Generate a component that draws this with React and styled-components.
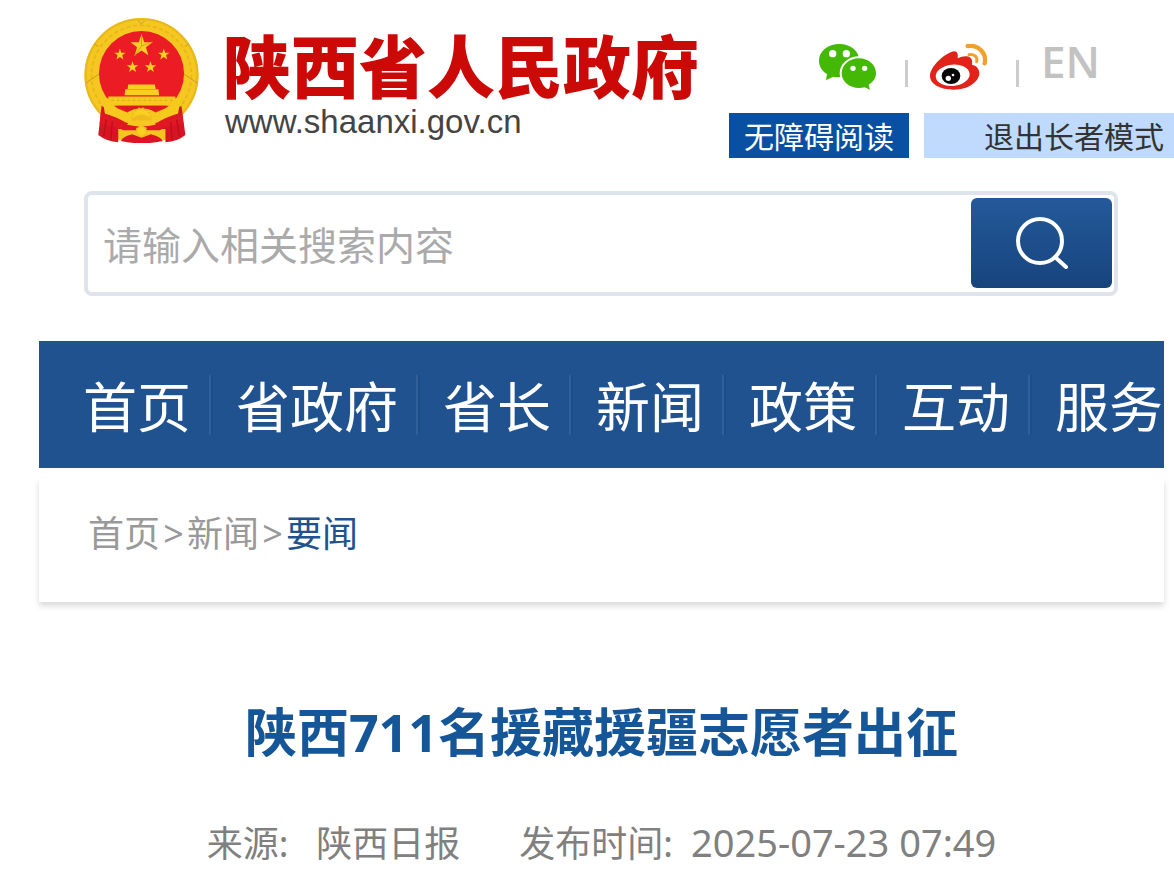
import React, { useState } from "react";
import styled, { createGlobalStyle } from "styled-components";

const GlobalStyle = createGlobalStyle`
  * {
    box-sizing: border-box;
  }

  body {
    margin: 0;
    background: #ffffff;
    font-family: "Noto Sans", "Noto Sans CJK SC", sans-serif;
    overflow-x: hidden;
  }

  a {
    color: inherit;
    text-decoration: none;
  }
`;

const Header = styled.header`
  display: flex;
  justify-content: space-between;
  align-items: flex-start;
  padding-left: 84px;
`;

const Brand = styled.a`
  display: flex;
  gap: 24px;
  padding-top: 18px;
`;

const BrandText = styled.div`
  display: flex;
  flex-direction: column;
  padding-top: 12px;
`;

const SiteName = styled.span`
  font-family: "Noto Sans CJK SC", sans-serif;
  font-weight: 900;
  font-size: 68px;
  line-height: 68px;
  white-space: nowrap;
  color: #cb0a08;
`;

const SiteUrl = styled.span`
  padding: 6px 0 0 2px;
  font-family: "Liberation Sans", sans-serif;
  font-size: 33px;
  line-height: 36px;
  color: #444444;
`;

const Tools = styled.div`
  display: flex;
  flex-direction: column;
  gap: 23px;
  padding-top: 44px;
`;

const Social = styled.div`
  display: flex;
  align-items: flex-start;
  justify-content: flex-end;
  height: 46px;
  padding-right: 74px;
`;

const SocialLink = styled.a`
  display: block;
  height: 46px;
`;

const Separator = styled.span`
  width: 3px;
  height: 27px;
  margin: 16px 22px 0 29px;
  background: #cccccc;
`;

const English = styled.a`
  font-family: "Open Sans", sans-serif;
  font-weight: 600;
  font-size: 44px;
  line-height: 34px;
  color: #c2c2c2;
`;

const Modes = styled.div`
  display: flex;
  gap: 15px;
`;

const ModeButton = styled.button`
  height: 45px;
  padding: ${(props) => (props.$light ? "0 10px 0 60px" : "0 15px")};
  border: 0;
  background: ${(props) => (props.$light ? "#bfdafd" : "#0950a3")};
  font-family: "Noto Sans CJK SC", sans-serif;
  font-size: 30px;
  line-height: 45px;
  white-space: nowrap;
  color: ${(props) => (props.$light ? "#333333" : "#ffffff")};
  cursor: pointer;
`;

const SearchForm = styled.form`
  display: flex;
  height: 105px;
  margin: 33px 56px 0 84px;
  padding: 3px 2px 4px 15px;
  border: 4px solid #dee4ec;
  border-radius: 8px;
`;

const SearchInput = styled.input`
  flex: 1;
  min-width: 0;
  padding: 0;
  border: 0;
  outline: none;
  background: transparent;
  font-family: "Noto Sans CJK SC", sans-serif;
  font-size: 39px;
  color: #333333;

  &::placeholder {
    color: #aaaaaa;
    opacity: 1;
  }
`;

const SearchButton = styled.button`
  display: flex;
  align-items: center;
  justify-content: center;
  width: 141px;
  padding: 0;
  border: 0;
  border-radius: 6px;
  background: linear-gradient(#24599b, #17447c);
  cursor: pointer;
`;

const Nav = styled.nav`
  display: flex;
  align-items: center;
  height: 127px;
  margin: 45px 10px 0 39px;
  padding-left: 44px;
  background: #20528f;
`;

const NavLink = styled.a`
  font-family: "Noto Sans CJK SC", sans-serif;
  font-size: 54px;
  line-height: 60px;
  white-space: nowrap;
  color: #ffffff;

  & + & {
    margin-left: 18px;
    padding-left: 25px;
    border-left: 2px solid #2f609b;
    box-shadow: inset 2px 0 #1d4d88;
  }
`;

const Crumbs = styled.nav`
  display: flex;
  align-items: center;
  height: 124px;
  margin: 10px 10px 0 39px;
  padding: 0 49px 13px;
  box-shadow: 0 4px 6px rgba(0, 0, 0, 0.15);
  font-size: 36px;
  line-height: 48px;
  color: #999999;
`;

const Arrow = styled.span`
  width: 27px;
  text-align: center;
`;

const Current = styled.a`
  color: #20528f;
`;

const Article = styled.main`
  margin: 0 10px 0 39px;
  padding: 96px 0 20px;
  text-align: center;
`;

const Title = styled.h1`
  margin: 0;
  font-weight: 700;
  font-size: 52px;
  line-height: 68px;
  color: #155699;
`;

const Meta = styled.div`
  display: flex;
  justify-content: center;
  gap: 59px;
  margin-top: 52px;
  font-size: 36px;
  line-height: 52px;
  color: #808080;
`;

const MetaItem = styled.div`
  display: flex;
  gap: ${(props) => props.$gap};
`;

const Time = styled.time`
  font-size: 38px;
  line-height: 48px;
`;

const navItems = ["首页", "省政府", "省长", "新闻", "政策", "互动", "服务"];

const starPoints = (cx, cy, r) => {
  const points = [];
  for (let i = 0; i < 10; i++) {
    const angle = (Math.PI / 5) * i - Math.PI / 2;
    const radius = i % 2 === 0 ? r : r * 0.4;
    points.push(
      `${cx + radius * Math.cos(angle)},${cy + radius * Math.sin(angle)}`
    );
  }
  return points.join(" ");
};

const Emblem = () => (
  <svg width="115" height="125" viewBox="42 54 344 376" aria-hidden="true">
    <circle cx="214" cy="226" r="172" fill="#f4c820" />
    <circle
      cx="214"
      cy="226"
      r="150"
      fill="none"
      stroke="#e9b41c"
      strokeWidth="5"
      strokeDasharray="12 8"
    />
    <circle
      cx="214"
      cy="226"
      r="168"
      fill="none"
      stroke="#e9b81e"
      strokeWidth="6"
    />
    <g stroke="#d39a14" strokeWidth="3" fill="none">
      <path d="M72 132l12 8M356 132l-12 8M204 62l10 10 10-10" />
      <path d="M46 250l44-30M382 250l-44-30" />
    </g>
    <circle cx="214" cy="221" r="128" fill="#ec1c24" />
    <g fill="#f8cf22">
      <polygon points={starPoints(214, 138, 35)} />
      <polygon points={starPoints(149, 164, 18)} />
      <polygon points={starPoints(281, 164, 18)} />
      <polygon points={starPoints(187, 202, 18)} />
      <polygon points={starPoints(241, 202, 18)} />
    </g>
    <path
      d="M214 103v35l-21 30M214 138l33-12"
      stroke="#dba015"
      strokeWidth="3"
      fill="none"
    />
    {/* drapes */}
    <path
      d="M94 318L84 406q26 20 60 22v-8h142v8q36-2 60-22l-12-88-60 40h-120z"
      fill="#d81322"
    />
    <path d="M144 388h142v34H144z" fill="#f3c51f" />
    <path d="M152 424q6-14 34-20l28 10 28-10q28 6 36 20-64 14-126 0z" fill="#dc1423" />
    {/* gate tower */}
    <path d="M174 254h80l3 14h8l2 18h-104l2-18h7z" fill="#f8cf22" />
    <path d="M170 269h90" stroke="#e2ab18" strokeWidth="3" />
    <path d="M114 290h202v28H114z" fill="#f6c91f" />
    <path
      d="M124 302h188"
      stroke="#e2ab18"
      strokeWidth="4"
      strokeDasharray="7 9"
    />
    {/* ribbon and cog wheels */}
    <path
      d="M96 294l18 2 8 22 50 20q14-12 42-12t42 12l50-20 8-22 18-2-8 48-60 26q-50 10-100 0l-60-26z"
      fill="#f6c91f"
    />
    <path d="M138 318h152l-38 16q-38-20-76 0z" fill="#e01822" />
    <circle
      cx="214"
      cy="354"
      r="28"
      fill="#f8cf22"
      stroke="#f0bd1d"
      strokeWidth="6"
      strokeDasharray="7 5"
    />
    <path d="M182 364q10-20 32-20t32 20z" fill="#efbb1d" />
    <path
      d="M92 338q54 14 82 36h80q28-22 82-36l4 34q-44 6-72 20h-108q-28-14-72-20z"
      fill="#e01822"
    />
    <path d="M180 362h68l10 12q-44 12-88 0z" fill="#f6c91f" />
    <circle
      cx="214"
      cy="394"
      r="15"
      fill="#f8cf22"
      stroke="#f0bd1d"
      strokeWidth="6"
      strokeDasharray="6 4"
    />
    <path
      d="M108 360l-8 50M126 366l-4 54M320 360l8 50M302 366l4 54"
      stroke="#b8101d"
      strokeWidth="4"
      fill="none"
    />
  </svg>
);

const Wechat = () => (
  <svg width="57" height="46" viewBox="57 44 171 138" aria-hidden="true">
    <path
      d="M118 44c-34 0-61 22-61 50 0 17 9 31 24 40l-3 19 22-11c6 2 12 2 18 2 34 0 60-22 60-50s-26-50-60-50z"
      fill="#44b905"
    />
    <path
      d="M177 87c-29 0-52 20-52 45s23 44 52 44c6 0 12-1 17-2l16 7-4-15c14-8 22-20 22-34 0-25-22-45-51-45z"
      fill="#44b905"
      stroke="#ffffff"
      strokeWidth="12"
      paintOrder="stroke"
    />
    <g fill="#ffffff">
      <circle cx="98" cy="73" r="11" />
      <circle cx="139" cy="73" r="11" />
      <circle cx="159" cy="117" r="8" />
      <circle cx="194" cy="117" r="8" />
    </g>
  </svg>
);

const Weibo = () => (
  <svg width="57" height="46" viewBox="390 44 171 138" aria-hidden="true">
    <path
      d="M462 66c-30 6-72 47-72 74 0 25 32 41 71 41 47 0 77-26 77-50 0-14-10-22-22-25 3-16-4-24-16-25-8-1-18 2-27 6 2-13-1-22-11-21z"
      fill="#e2231a"
    />
    <ellipse
      cx="458"
      cy="138"
      rx="51"
      ry="32"
      transform="rotate(-6 458 138)"
      fill="#ffffff"
    />
    <ellipse cx="453" cy="140" rx="28" ry="24" fill="#080808" />
    <circle cx="445" cy="147" r="8" fill="#ffffff" />
    <circle cx="459" cy="137" r="4" fill="#ffffff" />
    <g fill="none" stroke="#efa12b" strokeLinecap="round">
      <path d="M503 50c34-5 58 24 51 52" strokeWidth="13" />
      <path d="M507 76c16-3 27 8 23 21" strokeWidth="9" />
    </g>
  </svg>
);

const Magnifier = () => (
  <svg width="52" height="52" viewBox="0 0 52 52" aria-hidden="true">
    <g fill="none" stroke="#ffffff" strokeLinecap="round">
      <circle cx="24" cy="24" r="22" strokeWidth="4" />
      <path d="M39 40l11 10" strokeWidth="4" />
    </g>
  </svg>
);

const App = () => {
  const [keyword, setKeyword] = useState("");

  const handleKeyword = (event) => {
    setKeyword(event.target.value);
  };

  const handleSubmit = (event) => {
    event.preventDefault();
  };

  return (
    <>
      <GlobalStyle />
      <Header>
        <Brand href="#">
          <Emblem />
          <BrandText>
            <SiteName>陕西省人民政府</SiteName>
            <SiteUrl>www.shaanxi.gov.cn</SiteUrl>
          </BrandText>
        </Brand>
        <Tools>
          <Social>
            <SocialLink href="#" aria-label="微信">
              <Wechat />
            </SocialLink>
            <Separator />
            <SocialLink href="#" aria-label="微博">
              <Weibo />
            </SocialLink>
            <Separator />
            <English href="#">EN</English>
          </Social>
          <Modes>
            <ModeButton type="button">无障碍阅读</ModeButton>
            <ModeButton type="button" $light>
              退出长者模式
            </ModeButton>
          </Modes>
        </Tools>
      </Header>
      <SearchForm onSubmit={handleSubmit}>
        <SearchInput
          type="text"
          aria-label="搜索"
          placeholder="请输入相关搜索内容"
          value={keyword}
          onChange={handleKeyword}
        />
        <SearchButton type="submit" aria-label="搜索">
          <Magnifier />
        </SearchButton>
      </SearchForm>
      <Nav>
        {navItems.map((item) => (
          <NavLink href="#" key={item}>
            {item}
          </NavLink>
        ))}
      </Nav>
      <Crumbs>
        <a href="#">首页</a>
        <Arrow>&gt;</Arrow>
        <a href="#">新闻</a>
        <Arrow>&gt;</Arrow>
        <Current href="#">要闻</Current>
      </Crumbs>
      <Article>
        <Title>陕西711名援藏援疆志愿者出征</Title>
        <Meta>
          <MetaItem $gap="28px">
            <span>来源:</span>
            <span>陕西日报</span>
          </MetaItem>
          <MetaItem $gap="18px">
            <span>发布时间:</span>
            <Time>2025-07-23 07:49</Time>
          </MetaItem>
        </Meta>
      </Article>
    </>
  );
};

export default App;
